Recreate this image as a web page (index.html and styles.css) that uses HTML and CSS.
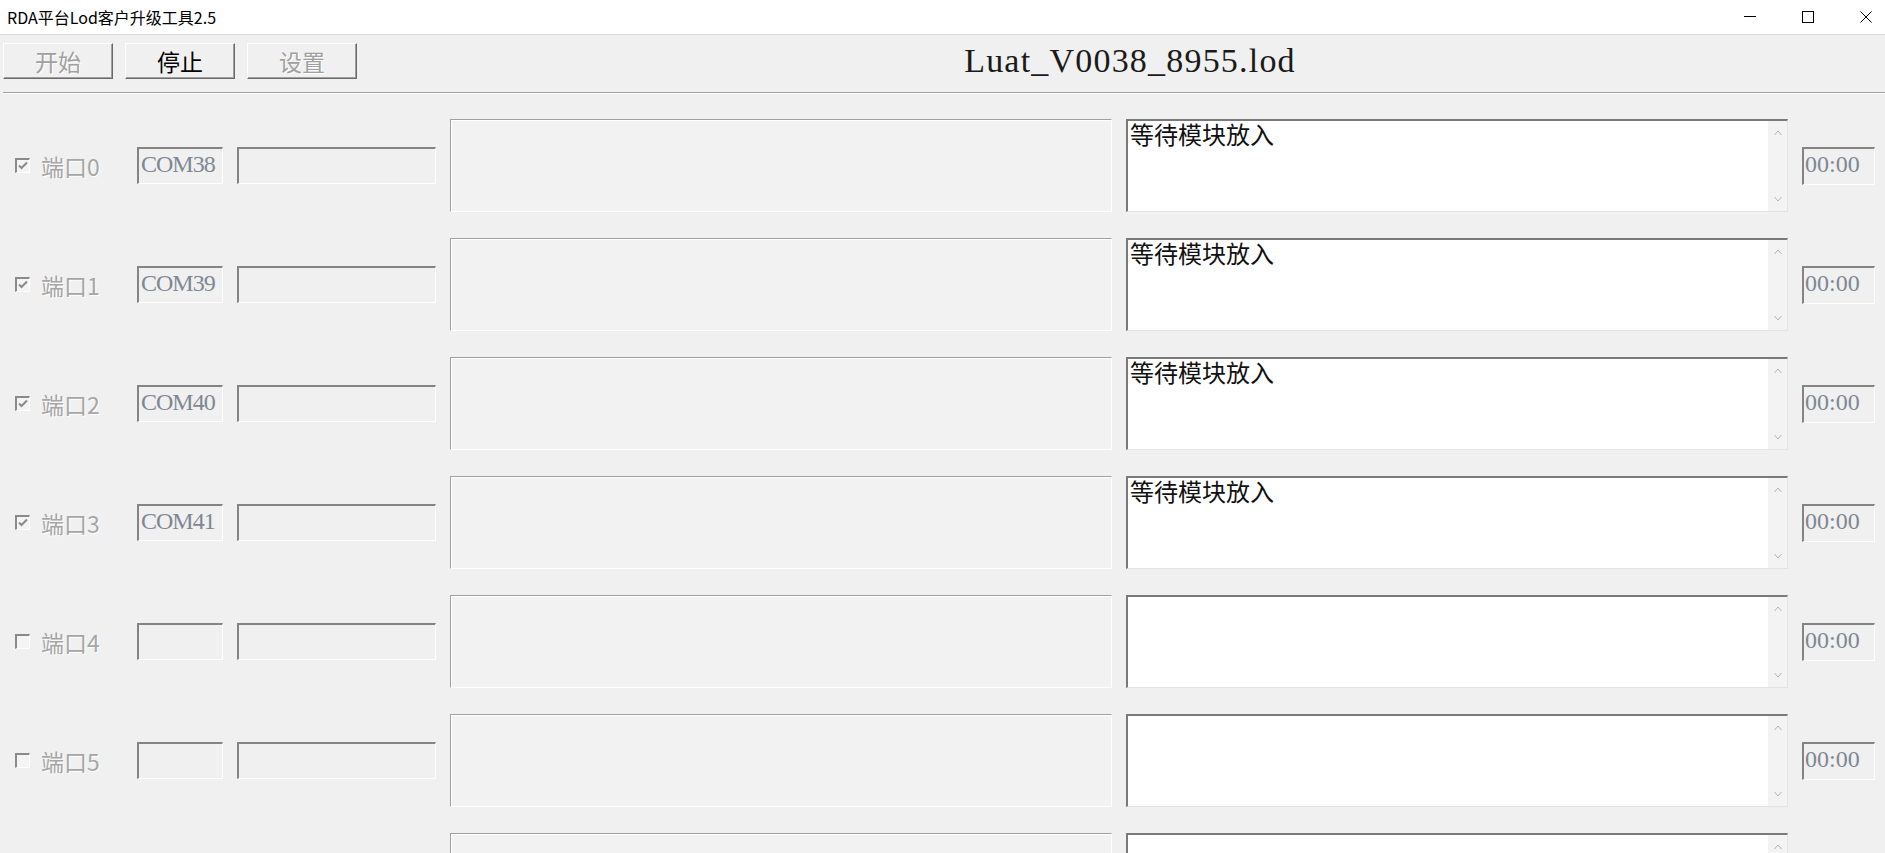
FILE: index.html
```html
<!DOCTYPE html>
<html lang="zh-CN">
<head>
  <meta charset="UTF-8">
  <title>RDA平台Lod客户升级工具2.5</title>
  <link rel="stylesheet" href="styles.css">
</head>
<body>
  <div class="titlebar">
    <span class="app-title">RDA平台Lod客户升级工具2.5</span>
    <div class="win-controls">
      <svg width="12" height="12" viewBox="0 0 12 12"><path d="M0 5.5h12" stroke="#000" stroke-width="1"/></svg>
      <svg width="12" height="12" viewBox="0 0 12 12"><rect x="0.5" y="0.5" width="11" height="11" fill="none" stroke="#000" stroke-width="1"/></svg>
      <svg width="12" height="12" viewBox="0 0 12 12"><path d="M0.5 0.5l11 11M11.5 0.5l-11 11" stroke="#000" stroke-width="1"/></svg>
    </div>
  </div>

  <div class="toolbar">
    <button class="btn" disabled>开始</button>
    <button class="btn">停止</button>
    <button class="btn" disabled>设置</button>
    <div class="lod-name">Luat_V0038_8955.lod</div>
  </div>
  <div class="separator"></div>

  <div class="ports">
    <div class="port-row">
      <span class="check"><svg width="12" height="12" viewBox="0 0 12 12"><path d="M2 5.5l2.5 2.5 5.5-5.5" fill="none" stroke="#8a8a8a" stroke-width="2"/></svg></span>
      <span class="port-label">端口0</span>
      <div class="field com">COM38</div>
      <div class="field info"></div>
      <div class="groupbox"></div>
      <div class="log">
        <div class="log-text">等待模块放入</div>
        <div class="scroll">
          <svg width="8" height="6" viewBox="0 0 8 6"><path d="M0.5 5L4 1l3.5 4" fill="none" stroke="#b4b4b4"/></svg>
          <svg width="8" height="6" viewBox="0 0 8 6"><path d="M0.5 1L4 5l3.5-4" fill="none" stroke="#b4b4b4"/></svg>
        </div>
      </div>
      <div class="field time">00:00</div>
    </div>

    <div class="port-row">
      <span class="check"><svg width="12" height="12" viewBox="0 0 12 12"><path d="M2 5.5l2.5 2.5 5.5-5.5" fill="none" stroke="#8a8a8a" stroke-width="2"/></svg></span>
      <span class="port-label">端口1</span>
      <div class="field com">COM39</div>
      <div class="field info"></div>
      <div class="groupbox"></div>
      <div class="log">
        <div class="log-text">等待模块放入</div>
        <div class="scroll">
          <svg width="8" height="6" viewBox="0 0 8 6"><path d="M0.5 5L4 1l3.5 4" fill="none" stroke="#b4b4b4"/></svg>
          <svg width="8" height="6" viewBox="0 0 8 6"><path d="M0.5 1L4 5l3.5-4" fill="none" stroke="#b4b4b4"/></svg>
        </div>
      </div>
      <div class="field time">00:00</div>
    </div>

    <div class="port-row">
      <span class="check"><svg width="12" height="12" viewBox="0 0 12 12"><path d="M2 5.5l2.5 2.5 5.5-5.5" fill="none" stroke="#8a8a8a" stroke-width="2"/></svg></span>
      <span class="port-label">端口2</span>
      <div class="field com">COM40</div>
      <div class="field info"></div>
      <div class="groupbox"></div>
      <div class="log">
        <div class="log-text">等待模块放入</div>
        <div class="scroll">
          <svg width="8" height="6" viewBox="0 0 8 6"><path d="M0.5 5L4 1l3.5 4" fill="none" stroke="#b4b4b4"/></svg>
          <svg width="8" height="6" viewBox="0 0 8 6"><path d="M0.5 1L4 5l3.5-4" fill="none" stroke="#b4b4b4"/></svg>
        </div>
      </div>
      <div class="field time">00:00</div>
    </div>

    <div class="port-row">
      <span class="check"><svg width="12" height="12" viewBox="0 0 12 12"><path d="M2 5.5l2.5 2.5 5.5-5.5" fill="none" stroke="#8a8a8a" stroke-width="2"/></svg></span>
      <span class="port-label">端口3</span>
      <div class="field com">COM41</div>
      <div class="field info"></div>
      <div class="groupbox"></div>
      <div class="log">
        <div class="log-text">等待模块放入</div>
        <div class="scroll">
          <svg width="8" height="6" viewBox="0 0 8 6"><path d="M0.5 5L4 1l3.5 4" fill="none" stroke="#b4b4b4"/></svg>
          <svg width="8" height="6" viewBox="0 0 8 6"><path d="M0.5 1L4 5l3.5-4" fill="none" stroke="#b4b4b4"/></svg>
        </div>
      </div>
      <div class="field time">00:00</div>
    </div>

    <div class="port-row">
      <span class="check"></span>
      <span class="port-label">端口4</span>
      <div class="field com"></div>
      <div class="field info"></div>
      <div class="groupbox"></div>
      <div class="log">
        <div class="log-text"></div>
        <div class="scroll">
          <svg width="8" height="6" viewBox="0 0 8 6"><path d="M0.5 5L4 1l3.5 4" fill="none" stroke="#b4b4b4"/></svg>
          <svg width="8" height="6" viewBox="0 0 8 6"><path d="M0.5 1L4 5l3.5-4" fill="none" stroke="#b4b4b4"/></svg>
        </div>
      </div>
      <div class="field time">00:00</div>
    </div>

    <div class="port-row">
      <span class="check"></span>
      <span class="port-label">端口5</span>
      <div class="field com"></div>
      <div class="field info"></div>
      <div class="groupbox"></div>
      <div class="log">
        <div class="log-text"></div>
        <div class="scroll">
          <svg width="8" height="6" viewBox="0 0 8 6"><path d="M0.5 5L4 1l3.5 4" fill="none" stroke="#b4b4b4"/></svg>
          <svg width="8" height="6" viewBox="0 0 8 6"><path d="M0.5 1L4 5l3.5-4" fill="none" stroke="#b4b4b4"/></svg>
        </div>
      </div>
      <div class="field time">00:00</div>
    </div>

    <!-- last row is only partly in view -->
    <div class="port-row">
      <span class="check"></span>
      <span class="port-label"></span>
      <div class="field com"></div>
      <div class="field info"></div>
      <div class="groupbox"></div>
      <div class="log">
        <div class="log-text"></div>
        <div class="scroll">
          <svg width="8" height="6" viewBox="0 0 8 6"><path d="M0.5 5L4 1l3.5 4" fill="none" stroke="#b4b4b4"/></svg>
          <svg width="8" height="6" viewBox="0 0 8 6"><path d="M0.5 1L4 5l3.5-4" fill="none" stroke="#b4b4b4"/></svg>
        </div>
      </div>
      <div class="field time"></div>
    </div>
  </div>
</body>
</html>
```

FILE: styles.css
```css
body {
  margin: 0;
  width: 1885px;
  height: 853px;
  overflow: hidden;
  background: #f0f0f0;
  font-family: "Noto Sans CJK SC", sans-serif;
}

.titlebar {
  height: 34px;
  display: flex;
  align-items: center;
  padding: 0 13px 0 7px;
  background: #fff;
  border-bottom: 1px solid #dadada;
}
.app-title {
  flex: 1;
  font-size: 16px;
  color: #000;
}
.win-controls {
  display: flex;
  align-items: center;
  gap: 46px;
}
.win-controls svg {
  display: block;
}

.toolbar {
  display: flex;
  align-items: center;
  gap: 12px;
  padding: 7px 0 12px 3px;
}
.btn {
  width: 110px;
  height: 36px;
  padding: 0;
  background: #f0f0f0;
  border: 1px solid;
  border-color: #fff #696969 #696969 #fff;
  box-shadow: inset -1px -1px 0 #a0a0a0;
  font-family: "Noto Sans CJK SC", sans-serif;
  font-size: 23px;
  line-height: 1;
  color: #000;
}
.btn:disabled {
  color: #a0a0a0;
  text-shadow: 1px 1px 0 #fff;
}
.lod-name {
  flex: 1;
  margin-left: 6px;
  text-align: center;
  font-family: "Liberation Serif", serif;
  font-size: 34px;
  letter-spacing: 1.2px;
  color: #1a1a1a;
}

.separator {
  margin-left: 3px;
  height: 1px;
  background: #a0a0a0;
  border-bottom: 1px solid #fff;
}

.ports {
  display: flex;
  flex-direction: column;
  gap: 26px;
  padding-top: 25px;
}
.port-row {
  height: 93px;
  display: flex;
  align-items: center;
  padding-left: 15px;
}

.check {
  width: 12px;
  height: 12px;
  display: flex;
  align-items: center;
  justify-content: center;
  background: #f4f4f4;
  border-top: 2px solid #8a8a8a;
  border-left: 2px solid #8a8a8a;
  border-right: 1px solid #fff;
  border-bottom: 1px solid #fff;
}
.check svg {
  display: block;
}
.port-label {
  width: 96px;
  margin-left: 11px;
  font-size: 23px;
  color: #a6a6a6;
  text-shadow: 1px 1px 0 #fff;
}

.field {
  box-sizing: border-box;
  height: 37px;
  padding: 0 0 0 2px;
  background: #f0f0f0;
  border-top: 2px solid #848484;
  border-left: 2px solid #848484;
  border-right: 1px solid #fff;
  border-bottom: 1px solid #fff;
  font-family: "Liberation Serif", serif;
  font-size: 24px;
  line-height: 30px;
  color: #7f8794;
  white-space: nowrap;
  overflow: hidden;
}
.com {
  width: 86px;
  letter-spacing: -1px;
}
.info {
  width: 199px;
  margin-left: 14px;
}
.time {
  width: 73px;
  height: 38px;
  margin-left: 14px;
  padding-left: 1px;
}

.groupbox {
  box-sizing: border-box;
  width: 662px;
  height: 93px;
  margin-left: 14px;
  background: #f2f2f2;
  border-top: 1px solid #a0a0a0;
  border-left: 1px solid #a0a0a0;
  border-right: 1px solid #fff;
  border-bottom: 1px solid #fff;
  box-shadow: inset 1px 1px 0 #fff;
}

.log {
  box-sizing: border-box;
  width: 662px;
  height: 93px;
  margin-left: 14px;
  display: flex;
  background: #fff;
  border-top: 2px solid #7a7a7a;
  border-left: 2px solid #7a7a7a;
  border-right: 1px solid #e3e3e3;
  border-bottom: 1px solid #e3e3e3;
}
.log-text {
  flex: 1;
  padding: 0 0 0 2px;
  font-size: 24px;
  line-height: 25px;
  color: #111;
}
.scroll {
  width: 19px;
  display: flex;
  flex-direction: column;
  justify-content: space-between;
  align-items: center;
  padding: 9px 0 9px;
  background: #f3f3f3;
}
.scroll svg {
  display: block;
}
```
